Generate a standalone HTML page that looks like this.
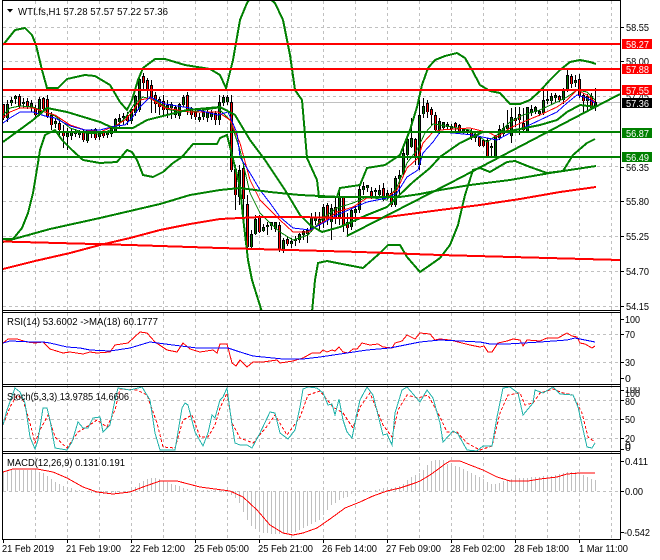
<!DOCTYPE html>
<html><head><meta charset="utf-8"><style>
html,body{margin:0;padding:0;background:#fff;width:660px;height:560px;overflow:hidden}
svg{display:block}
text{font-family:"Liberation Sans",sans-serif;font-size:10.5px;fill:#000}
</style></head><body>
<svg width="660" height="560" viewBox="0 0 660 560" xmlns="http://www.w3.org/2000/svg">
<defs>
<clipPath id="m"><rect x="3" y="1" width="617" height="309"/></clipPath>
<clipPath id="s"><rect x="622" y="387" width="38" height="66"/></clipPath>
<path id="gb" d="M7 105V118M11 101V103M15 97V99M23 103V104M31 104V108M39 100V114M55 122V124M67 134V137M71 132V136M75 132V134M79 133V135M87 131V141M91 131V133M99 134V137M107 133V135M111 129V134M115 120V131M119 119V122M123 117V118M131 110V121M135 97V113M139 80V110M167 106V110M171 105V108M175 108V115M179 105V116M183 98V105M199 118V120M203 113V117M207 113V118M211 113V117M219 103V120M223 98V103M227 98V102M239 171V197M251 235V247M255 220V234M263 228V231M267 226V227M271 223V226M275 223V229M283 241V250M291 242V244M295 240V241M299 235V240M303 232V235M307 231V234M311 218V230M315 218V221M323 208V222M331 209V222M339 198V217M351 211V227M355 210V213M359 190V210M363 187V190M367 186V188M375 191V192M379 191V195M387 194V196M395 179V205M399 176V179M403 154V173M407 140V155M411 139V147M419 116V165M423 107V114M439 122V130M443 123V128M447 125V127M451 127V129M463 130V132M467 131V133M475 135V138M491 147V148M495 137V156M499 130V138M503 129V134M507 126V129M511 118V136M527 108V132M531 110V113M535 108V112M539 112V114M543 101V113M547 100V101M551 97V101M555 96V98M563 90V100M567 76V91M575 81V83M587 97V101M595 103V107"/>
<path id="rb" d="M3 105V118M19 97V106M27 102V106M35 109V115M43 99V109M47 100V117M51 116V125M59 124V130M63 132V136M83 132V140M95 130V138M103 133V136M127 116V121M143 77V83M147 81V89M151 86V98M155 96V104M159 100V107M163 102V110M187 96V110M191 110V115M195 113V117M215 114V120M231 103V170M235 170V195M243 169V199M247 205V247M259 217V232M279 226V250M287 240V244M319 220V225M327 206V220M335 208V218M343 197V225M347 223V228M371 192V196M383 189V199M391 194V205M415 140V156M427 104V112M431 110V115M435 116V130M455 124V127M459 126V131M471 132V137M479 138V146M483 141V146M487 141V156M515 119V121M519 115V120M523 124V130M559 97V100M571 77V84M579 80V96M583 96V101M591 97V108"/>
</defs>

<!-- grid -->
<g stroke="#c0c0c0" fill="none" stroke-dasharray="3 3" shape-rendering="crispEdges">
<path d="M35.500 1V539M67.500 1V539M99.500 1V539M131.500 1V539M163.500 1V539M195.500 1V539M227.500 1V539M259.500 1V539M291.500 1V539M323.500 1V539M355.500 1V539M387.500 1V539M419.500 1V539M451.500 1V539M483.500 1V539M515.500 1V539M547.500 1V539M579.500 1V539M611.500 1V539"/>
<path d="M3 27.500H620M3 61.500H620M3 96.500H620M3 131.500H620M3 166.500H620M3 201.500H620M3 236.500H620M3 271.500H620M3 306.500H620M3 334.500H620M3 362.500H620M3 400.500H620M3 419.500H620M3 438.500H620M3 491.500H620"/>
</g>
<path d="M3 102.500H620" stroke="#c0c0c0" shape-rendering="crispEdges"/>

<!-- candles -->
<g clip-path="url(#m)" shape-rendering="crispEdges" fill="none">
<g transform="translate(.5,0)">
<path stroke="#000" d="M3 104V120M7 100V122M11 97V106M15 95V104M19 94V108M23 98V108M27 98V109M31 100V112M35 105V117M39 97V116M43 97V112M47 95V118M51 112V130M55 118V128M59 118V135M63 125V148M67 128V150M71 128V140M75 129V137M79 130V138M83 130V142M87 130V143M91 129V138M95 128V140M99 132V140M103 131V138M107 131V138M111 126V137M115 118V133M119 114V127M123 113V125M127 112V125M131 108V124M135 95V116M139 76V112M143 73V90M147 78V100M151 80V113M155 92V113M159 97V115M163 95V115M167 100V118M171 102V119M175 105V118M179 103V119M183 95V107M187 92V115M191 107V119M195 110V120M199 113V122M203 110V120M207 110V122M211 110V120M215 111V125M219 95V125M223 95V106M227 95V105M231 95V172M235 165V210M239 165V205M243 163V215M247 195V248M251 230V250M255 215V235M259 215V233M263 224V232M267 222V235M271 222V230M275 222V232M279 222V252M283 238V253M287 236V246M291 238V248M295 236V246M299 233V243M303 230V240M307 228V243M311 213V232M315 212V225M319 212V231M323 204V228M327 203V225M331 204V240M335 198V224M339 190V225M343 197V232M347 213V237M351 208V230M355 205V222M359 185V213M363 182V195M367 185V192M371 187V199M375 188V196M379 185V197M383 183V201M387 190V200M391 188V207M395 176V207M399 170V197M403 148V175M407 137V160M411 118V148M415 138V165M419 100V170M423 98V118M427 100V118M431 107V125M435 112V132M439 118V134M443 122V130M447 122V130M451 124V131M455 122V133M459 124V133M463 128V134M467 129V135M471 128V140M475 133V142M479 137V147M483 139V147M487 138V158M491 143V157M495 135V157M499 125V140M503 123V136M507 110V133M511 108V143M515 107V127M519 107V135M523 108V133M527 107V133M531 105V116M535 106V114M539 110V116M543 88V115M547 90V104M551 93V105M555 93V102M559 95V102M563 88V104M567 69V92M571 74V88M575 75V87M579 74V98M583 93V113M587 94V110M591 93V108M595 88V111"/>
<use href="#gb" y="-1" stroke="#000" stroke-width="3"/>
<use href="#rb" y="-1" stroke="#000" stroke-width="3"/>
<use href="#gb" stroke="#000" stroke-width="3"/>
<use href="#rb" stroke="#000" stroke-width="3"/>
<use href="#gb" stroke="#007000"/>
<use href="#rb" stroke="#ff0000"/>
</g>
</g>

<!-- MAs and bands -->
<g clip-path="url(#m)" fill="none" shape-rendering="crispEdges">
<polyline stroke="#008000" points="3,115 10,108 20,106 33,107 45,112 55,116 70,128 85,133 100,134 115,128 125,118 135,103 143,97 155,100 170,110 190,112 218,108 230,120 240,150 250,193 260,213 270,223 280,232 293,240 308,235 323,218 337,208 353,203 367,197 387,200 397,187 407,163 417,150 425,133 433,124 440,125 470,130 487,142 497,135 510,122 523,115 540,110 557,102 567,97 577,90 587,92 595,100"/>
<polyline stroke="#ff0000" points="3,118 10,112 20,108 33,108 45,112 55,115 70,125 85,130 100,132 115,126 125,120 132,112 140,100 150,98 165,108 190,112 218,112 230,120 240,143 250,180 260,200 270,210 280,220 293,232 308,232 323,222 337,212 353,207 367,198 387,197 397,190 407,168 418,158 423,143 433,132 440,130 470,128 490,133 497,137 510,128 523,122 540,115 557,107 567,100 577,90 587,95 595,102"/>
<polyline stroke="#0000ff" points="3,123 10,118 20,112 33,112 45,116 55,118 70,126 85,130 100,130 115,126 125,125 132,118 140,107 150,97 165,104 190,108 218,115 228,112 237,133 240,157 250,173 260,190 270,203 280,217 293,228 310,230 323,223 337,215 353,208 367,202 387,198 397,193 407,177 418,170 423,153 433,142 440,132 453,133 473,135 487,138 497,140 510,133 523,128 540,120 557,112 567,103 577,95 587,98 595,103"/>
<g stroke="#008000" stroke-width="2">
<polyline points="3,45 15,30 25,28 32,35 36,45 42,70 47,88 58,88 67,79 85,75 95,76 110,85 120,102 127,110 132,100 138,80 143,68 155,59 165,59 185,65 210,69 220,75 226,88 233,60 240,20 247,3 252,-5 265,-5 275,3 283,20 290,55 295,90 302,100 307,158 317,180 319,197 330,197 337,197 340,188 360,185 367,168 385,165 400,155 410,130 417,107 422,85 428,68 435,60 445,56 457,53 465,58 472,70 480,85 490,91 500,93 510,104 520,104 530,100 540,91 550,80 560,70 570,62 580,60 590,62 596,64"/>
<polyline points="3,142 33,120 47,108 67,112 100,122 113,128 133,128 147,120 167,115 187,110 220,107 235,115 250,140 265,160 285,190 300,215 310,225 322,232 340,227 367,215 387,207 413,182 430,168 440,157 460,143 483,132 500,132 510,131 540,125 557,120 567,112 580,105 596,107"/>
<polyline points="3,239 13,239 22,228 28,213 33,193 38,163 40,150 45,135 55,130 62,140 72,150 83,160 100,163 117,162 127,150 132,152 137,160 143,175 153,177 163,172 173,163 182,157 193,144 217,144 220,138 227,135 240,187 243,217 248,260 252,280 262,312"/>
<polyline points="312,312 315,280 318,263 327,261 337,263 363,268 380,253 388,245 400,245 407,257 420,272 433,263 440,258 450,245 458,225 465,195 473,170 480,168 490,172 507,162 515,161 530,167 547,173 563,171 573,155 587,143 595,139"/>
<polyline points="3,242 50,229 100,218 130,211 160,204 190,195 220,190 240,188 270,192 300,195 340,197 370,197 400,197 420,194 440,190 470,185 510,180 550,173 596,166"/>
</g>
<polyline stroke="#ff0000" stroke-width="2" points="3,269 35,261 70,253 100,245 130,238 160,230 190,224 220,219 260,217 300,217 340,218 380,218 410,214 440,210 480,205 520,199 560,192 596,187"/>
<path stroke="#ff0000" stroke-width="2" d="M3 241.500L130 245L220 248L360 252L440 255L620 260"/>
<path stroke="#008000" stroke-width="2" d="M347 236L456 180L620 94"/>
<path stroke="#ff0000" stroke-width="2" d="M3 44H620M3 69H620M3 90H620"/>
<path stroke="#008000" stroke-width="2" d="M3 132H620M3 157H620"/>
</g>

<!-- RSI -->
<g fill="none" shape-rendering="crispEdges">
<polyline stroke="#ff0000" points="3,343 8,339 17,339 27,342 35,343 43,342 50,349 63,353 70,352 83,354 90,352 97,353 110,352 115,345 128,343 140,332 147,333 155,342 167,350 177,352 183,343 190,349 200,352 213,350 217,353 220,344 227,344 232,363 236,366 240,360 247,367 253,362 263,362 277,360 280,363 293,361 303,358 312,353 320,353 323,350 327,352 332,350 335,351 339,347 343,352 348,353 353,349 357,349 362,343 370,345 378,344 383,347 392,348 395,343 402,341 407,335 415,339 420,333 430,334 435,340 440,339 450,340 458,342 470,345 480,347 484,346 488,352 492,352 498,343 507,341 513,339 520,340 523,346 527,340 540,341 547,338 558,338 567,333 572,336 577,337 580,343 585,344 592,348 595,346"/>
<polyline stroke="#0000ff" points="3,343 10,341 33,342 43,342 50,343 67,347 80,348 90,350 110,351 130,348 140,345 150,342 173,345 197,348 220,348 228,348 240,352 253,356 273,358 283,359 303,359 320,357 347,353 367,350 390,348 420,342 440,340 480,342 490,344 507,344 540,342 567,340 575,338 595,342"/>
<!-- Stoch -->
<polyline stroke="#ff0000" stroke-dasharray="3 2" points="3,425 10,407 17,395 23,400 30,423 35,443 40,430 48,415 55,437 67,448 78,432 85,428 97,420 107,427 115,410 120,389 137,390 147,395 157,423 163,447 175,448 183,420 192,415 200,437 208,437 215,425 220,408 227,393 232,423 240,438 253,443 268,425 275,415 287,435 300,417 308,395 320,391 333,407 343,413 353,428 360,407 370,393 383,425 392,437 398,410 407,395 418,398 428,395 440,417 447,432 457,432 467,443 480,450 492,446 500,413 508,395 520,393 525,405 533,403 540,393 553,389 563,393 573,395 582,413 588,437 595,442"/>
<polyline stroke="#20b2aa" points="3,425 7,410 15,388 20,392 25,403 30,437 35,449 38,440 43,408 47,408 50,420 55,448 67,450 72,442 78,422 83,428 88,428 93,418 100,417 103,432 110,425 115,400 118,388 130,390 142,387 150,400 155,433 160,450 175,450 182,408 185,403 188,405 195,432 203,446 208,433 212,415 215,418 220,400 223,397 227,388 231,418 235,443 240,445 247,445 252,448 260,433 270,412 275,413 280,433 288,439 295,430 300,407 303,389 308,387 317,388 323,393 328,405 332,404 335,415 339,399 343,420 347,432 352,438 357,413 360,400 367,387 373,395 383,435 387,434 392,445 395,413 402,390 407,387 420,402 427,390 433,398 440,423 443,442 453,431 458,434 467,450 477,451 483,446 492,446 497,417 503,388 510,387 518,393 523,415 533,403 535,390 543,393 553,387 560,394 573,395 578,407 587,447 592,448 595,443"/>
<!-- MACD -->
<path stroke="#c0c0c0" d="M3.500 491V472M7.500 491V471M11.500 491V470M15.500 491V470M19.500 491V470M23.500 491V470M27.500 491V470M31.500 491V470M35.500 491V471M39.500 491V472M43.500 491V473M47.500 491V476M51.500 491V479M55.500 491V482M59.500 491V484M63.500 491V486M67.500 491V487M71.500 491V488M75.500 491V490M79.500 491V490M83.500 491V492M87.500 491V492M91.500 491V493M95.500 491V493M99.500 491V493M103.500 491V494M107.500 491V493M111.500 491V493M115.500 491V493M119.500 491V493M123.500 491V492M127.500 491V492M131.500 491V490M135.500 491V487M139.500 491V483M143.500 491V481M147.500 491V479M151.500 491V478M155.500 491V478M159.500 491V479M163.500 491V481M167.500 491V482M171.500 491V484M175.500 491V485M179.500 491V486M183.500 491V488M187.500 491V489M191.500 491V490M195.500 491V490M199.500 491V490M203.500 491V490M207.500 491V490M211.500 491V490M215.500 491V490M219.500 491V490M223.500 491V492M227.500 491V492M231.500 491V495M235.500 491V498M239.500 491V503M243.500 491V512M247.500 491V520M251.500 491V526M255.500 491V529M259.500 491V531M263.500 491V533M267.500 491V533M271.500 491V534M275.500 491V534M279.500 491V534M283.500 491V534M287.500 491V533M291.500 491V533M295.500 491V532M299.500 491V530M303.500 491V528M307.500 491V526M311.500 491V524M315.500 491V522M319.500 491V520M323.500 491V515M327.500 491V510M331.500 491V505M335.500 491V503M339.500 491V500M343.500 491V498M347.500 491V497M351.500 491V494M355.500 491V492M359.500 491V490M363.500 491V490M367.500 491V492M371.500 491V492M375.500 491V490M379.500 491V489M383.500 491V488M387.500 491V488M391.500 491V488M395.500 491V487M399.500 491V486M403.500 491V484M407.500 491V480M411.500 491V477M415.500 491V475M419.500 491V473M423.500 491V470M427.500 491V465M431.500 491V461M435.500 491V460M439.500 491V460M443.500 491V460M447.500 491V464M451.500 491V465M455.500 491V466M459.500 491V467M463.500 491V469M467.500 491V471M471.500 491V473M475.500 491V475M479.500 491V477M483.500 491V479M487.500 491V482M491.500 491V484M495.500 491V484M499.500 491V483M503.500 491V481M507.500 491V480M511.500 491V479M515.500 491V478M519.500 491V478M523.500 491V478M527.500 491V478M531.500 491V477M535.500 491V477M539.500 491V477M543.500 491V476M547.500 491V476M551.500 491V476M555.500 491V475M559.500 491V474M563.500 491V473M567.500 491V472M571.500 491V472M575.500 491V472M579.500 491V473M583.500 491V475M587.500 491V477M591.500 491V479M595.500 491V480"/>
<polyline stroke="#ff0000" points="3,472 13,469 37,469 53,472 67,478 83,487 97,492 113,494 130,492 143,487 160,481 177,481 200,487 230,491 243,497 257,510 270,525 283,533 293,535 303,533 317,528 330,519 345,508 360,502 373,496 387,491 400,488 415,483 420,481 430,475 437,470 445,464 450,461 460,461 470,465 483,470 497,477 510,481 528,481 540,479 557,477 567,474 580,473 595,473"/>
</g>

<!-- frame -->
<g stroke="#000" fill="none" shape-rendering="crispEdges">
<path d="M2.500 0V540M620.500 0V540M2 .5H621M2 310.500H621M2 312.500H621M2 384.500H621M2 386.500H621M2 451.500H621M2 453.500H621M2 539.500H621"/>
<path d="M3.500 540V543M67.500 540V543M131.500 540V543M195.500 540V543M259.500 540V543M323.500 540V543M387.500 540V543M451.500 540V543M515.500 540V543M579.500 540V543"/>
<path d="M621 27.500H624M621 61.500H624M621 167.500H624M621 201.500H624M621 236.500H624M621 271.500H624M621 306.500H624M621 319.500H624M621 334.500H624M621 362.500H624M621 378.500H624M621 390.500H624M621 400.500H624M621 419.500H624M621 438.500H624M621 449.500H624M621 461.500H624M621 491.500H624M621 532.500H624"/>
</g>

<!-- right axis text -->
<g>
<text x="626" y="31" textLength="23" lengthAdjust="spacingAndGlyphs">58.55</text>
<text x="626" y="65" textLength="23" lengthAdjust="spacingAndGlyphs">58.00</text>
<text x="626" y="100" textLength="23" lengthAdjust="spacingAndGlyphs">57.45</text>
<text x="626" y="171" textLength="23" lengthAdjust="spacingAndGlyphs">56.35</text>
<text x="626" y="205" textLength="23" lengthAdjust="spacingAndGlyphs">55.80</text>
<text x="626" y="240" textLength="23" lengthAdjust="spacingAndGlyphs">55.25</text>
<text x="626" y="275" textLength="23" lengthAdjust="spacingAndGlyphs">54.70</text>
<text x="626" y="310" textLength="23" lengthAdjust="spacingAndGlyphs">54.15</text>
<text x="625" y="323" textLength="15" lengthAdjust="spacingAndGlyphs">100</text>
<text x="625" y="338" textLength="10" lengthAdjust="spacingAndGlyphs">70</text>
<text x="625" y="366" textLength="10" lengthAdjust="spacingAndGlyphs">30</text>
<text x="625" y="382">0</text>
<g clip-path="url(#s)">
<text x="625" y="393" textLength="15" lengthAdjust="spacingAndGlyphs">100</text>
<text x="625" y="397" textLength="15" lengthAdjust="spacingAndGlyphs">100</text>
<text x="625" y="405" textLength="10" lengthAdjust="spacingAndGlyphs">80</text>
<text x="625" y="423" textLength="10" lengthAdjust="spacingAndGlyphs">50</text>
<text x="625" y="442" textLength="10" lengthAdjust="spacingAndGlyphs">20</text>
<text x="625" y="449">0</text>
<text x="625" y="451">0</text>
</g>
<text x="625" y="465" textLength="23" lengthAdjust="spacingAndGlyphs">0.411</text>
<text x="625" y="495" textLength="18" lengthAdjust="spacingAndGlyphs">0.00</text>
<text x="624" y="536" textLength="26" lengthAdjust="spacingAndGlyphs">-0.542</text>
<rect x="622" y="39" width="30" height="10" fill="#ff0000"/>
<rect x="622" y="64" width="30" height="10" fill="#ff0000"/>
<rect x="622" y="85" width="30" height="10" fill="#ff0000"/>
<rect x="622" y="98" width="30" height="10" fill="#000"/>
<rect x="622" y="128" width="30" height="10" fill="#008000"/>
<rect x="622" y="152" width="30" height="10" fill="#008000"/>
<g>
<text x="626" y="48" textLength="23" lengthAdjust="spacingAndGlyphs" style="fill:#fff">58.27</text>
<text x="626" y="73" textLength="23" lengthAdjust="spacingAndGlyphs" style="fill:#fff">57.88</text>
<text x="626" y="94" textLength="23" lengthAdjust="spacingAndGlyphs" style="fill:#fff">57.55</text>
<text x="626" y="107" textLength="23" lengthAdjust="spacingAndGlyphs" style="fill:#fff">57.36</text>
<text x="626" y="137" textLength="23" lengthAdjust="spacingAndGlyphs" style="fill:#fff">56.87</text>
<text x="626" y="161" textLength="23" lengthAdjust="spacingAndGlyphs" style="fill:#fff">56.49</text>
</g>
</g>

<!-- labels -->
<path d="M7 9H13L10 12.500Z" fill="#000"/>
<text x="18" y="15" textLength="150" lengthAdjust="spacingAndGlyphs">WTI.fs,H1  57.28 57.57 57.22 57.36</text>
<text x="7" y="325" textLength="151" lengthAdjust="spacingAndGlyphs">RSI(14) 53.6002  -&gt;MA(18) 60.1777</text>
<text x="7" y="400" textLength="122" lengthAdjust="spacingAndGlyphs">Stoch(5,3,3) 13.9785 14.6606</text>
<text x="7" y="466" textLength="118" lengthAdjust="spacingAndGlyphs">MACD(12,26,9) 0.131 0.191</text>

<!-- time axis -->
<g>
<text x="2" y="552" textLength="52" lengthAdjust="spacingAndGlyphs">21 Feb 2019</text>
<text x="66" y="552" textLength="55" lengthAdjust="spacingAndGlyphs">21 Feb 19:00</text>
<text x="130" y="552" textLength="55" lengthAdjust="spacingAndGlyphs">22 Feb 12:00</text>
<text x="194" y="552" textLength="55" lengthAdjust="spacingAndGlyphs">25 Feb 05:00</text>
<text x="258" y="552" textLength="55" lengthAdjust="spacingAndGlyphs">25 Feb 21:00</text>
<text x="322" y="552" textLength="55" lengthAdjust="spacingAndGlyphs">26 Feb 14:00</text>
<text x="386" y="552" textLength="55" lengthAdjust="spacingAndGlyphs">27 Feb 09:00</text>
<text x="450" y="552" textLength="55" lengthAdjust="spacingAndGlyphs">28 Feb 02:00</text>
<text x="514" y="552" textLength="55" lengthAdjust="spacingAndGlyphs">28 Feb 18:00</text>
<text x="579" y="552" textLength="49" lengthAdjust="spacingAndGlyphs">1 Mar 11:00</text>
</g>
</svg>
</body></html>
